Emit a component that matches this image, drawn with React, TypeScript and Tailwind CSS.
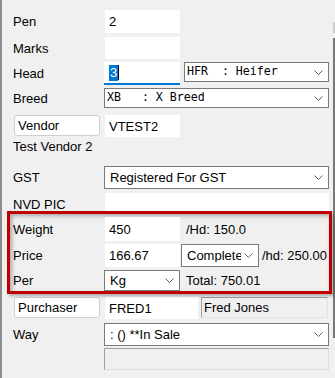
import React from "react";

const Chevron = () => (
  <svg width="9" height="5" viewBox="0 0 9 5" className="shrink-0 ml-[3px] mr-[5px]">
    <polyline points="0.5,0.5 4.5,4.5 8.5,0.5" fill="none" stroke="#606060" strokeWidth="1" />
  </svg>
);

function Label({ children, w = "w-[103px] pl-[11px]" }: { children?: React.ReactNode; w?: string }) {
  return <div className={`${w} shrink-0 h-full flex items-center whitespace-nowrap`}>{children}</div>;
}

function Field({ children, w, extra = "" }: { children?: React.ReactNode; w: string; extra?: string }) {
  return <div className={`${w} h-full bg-white pl-[4px] flex items-center shrink-0 whitespace-nowrap ${extra}`}>{children}</div>;
}

function Select({
  children,
  w,
  h = "h-full",
  mono = false,
  clip = false,
  extra = "",
}: {
  children?: React.ReactNode;
  w: string;
  h?: string;
  mono?: boolean;
  clip?: boolean;
  extra?: string;
}) {
  return (
    <div className={`${w} ${h} bg-white border border-[#7a7a7a] flex items-center shrink-0 ${extra}`}>
      <div
        className={`flex-1 min-w-0 whitespace-pre ${clip ? "overflow-hidden" : ""} ${
          mono ? "pl-[2px] font-['DejaVu_Sans_Mono',monospace] text-[11.6px]" : "pl-[5px]"
        }`}
      >
        {children}
      </div>
      <Chevron />
    </div>
  );
}

function BoxLabel({ children }: { children: React.ReactNode }) {
  return (
    <div className="ml-[12px] w-[86px] h-[21px] shrink-0 rounded-[3px] border border-[#cfcfcf] bg-white pl-[3px] flex items-center">
      {children}
    </div>
  );
}

export default function App() {
  return (
    <div className="w-[335px] h-[378px] bg-[#f0f0f0] flex overflow-hidden text-[13px] text-black font-['Liberation_Sans',Arial,sans-serif] leading-none">
      <div className="w-[2px] shrink-0 bg-[#8c8c8c]" />
      <div className="flex-1 flex flex-col min-w-0">
        {/* Pen */}
        <div className="mt-[10px] h-[23px] flex items-center">
          <Label>Pen</Label>
          <Field w="w-[75px]">2</Field>
        </div>
        {/* Marks */}
        <div className="mt-[4px] h-[22px] flex items-center">
          <Label>Marks</Label>
          <Field w="w-[75px]" />
        </div>
        {/* Head */}
        <div className="mt-[3px] h-[23px] flex items-start">
          <Label>Head</Label>
          <div className="w-[76px] ml-[-1px] h-full bg-white border-b-2 border-[#0078d7] pl-[5px] flex items-center shrink-0">
            <span className="bg-[#0078d7] text-white px-[1px] leading-[16px]">3</span>
            <span className="w-px h-[15px] bg-black" />
          </div>
          <Select w="w-[145px]" h="h-[20px]" mono extra="ml-[4px]">
            {"HFR  : Heifer"}
          </Select>
        </div>
        {/* Breed */}
        <div className="mt-[3px] h-[20px] flex items-center">
          <Label>Breed</Label>
          <Select w="w-[225px]" mono extra="ml-[-1px]">
            {"XB   : X Breed"}
          </Select>
        </div>
        {/* Vendor */}
        <div className="mt-[7px] h-[22px] flex items-start">
          <BoxLabel>Vendor</BoxLabel>
          <Field w="w-[75px]" extra="ml-[5px]">
            VTEST2
          </Field>
        </div>
        {/* Test Vendor 2 */}
        <div className="h-[19px] flex items-center">
          <Label w="w-[200px] pl-[11px]">Test Vendor 2</Label>
        </div>
        {/* GST */}
        <div className="mt-[10px] h-[23px] flex items-center">
          <Label>GST</Label>
          <Select w="w-[225px]" extra="ml-[-1px]">
            Registered For GST
          </Select>
        </div>
        {/* NVD PIC */}
        <div className="mt-[4px] h-[22px] flex items-center">
          <Label>NVD PIC</Label>
          <Field w="w-[224px]" />
        </div>
        {/* Highlighted block */}
        <div className="relative mt-[-4px] ml-[5px] mr-[1px] h-[83px] shrink-0 border-[3px] border-[#c00000] bg-[#f0f0f0] flex flex-col shadow-[inset_2px_2px_4px_rgba(0,0,0,0.3),2px_2px_3px_rgba(0,0,0,0.3)]">
          <div className="mt-[3px] h-[24px] flex items-center">
            <Label w="w-[95px] pl-[3px]">Weight</Label>
            <Field w="w-[75px]">450</Field>
            <span className="ml-[6px] whitespace-nowrap">/Hd: 150.0</span>
          </div>
          <div className="mt-[3px] h-[23px] flex items-center">
            <Label w="w-[95px] pl-[3px]">Price</Label>
            <Field w="w-[75px]">166.67</Field>
            <Select w="w-[78px]" clip extra="ml-[1px]">
              Complete
            </Select>
            <span className="ml-[3px] whitespace-nowrap">/hd: 250.00</span>
          </div>
          <div className="mt-[3px] h-[21px] flex items-center">
            <Label w="w-[95px] pl-[3px]">Per</Label>
            <Select w="w-[76px]" extra="ml-[-1px]">
              Kg
            </Select>
            <span className="ml-[6px] whitespace-nowrap">Total: 750.01</span>
          </div>
        </div>
        {/* Purchaser */}
        <div className="mt-[3px] h-[22px] flex items-start">
          <BoxLabel>Purchaser</BoxLabel>
          <Field w="w-[93px]" extra="ml-[5px]">
            FRED1
          </Field>
          <div className="ml-[3px] w-[127px] h-[21px] shrink-0 border-t border-l border-[#a0a0a0] border-b border-r border-b-[#e3e3e3] border-r-[#e3e3e3] pl-[2px] flex items-center whitespace-nowrap">
            Fred Jones
          </div>
        </div>
        {/* Way */}
        <div className="mt-[4px] h-[23px] flex items-center">
          <Label>Way</Label>
          <Select w="w-[225px]" extra="ml-[-1px]">
            : () **In Sale
          </Select>
        </div>
        <div className="mt-[2px] h-[22px] flex">
          <div className="ml-[102px] w-[225px] h-full border-t border-l border-[#a0a0a0] border-b border-r border-b-[#dcdcdc] border-r-[#dcdcdc]" />
        </div>
      </div>
      <div className="w-[2px] shrink-0 flex flex-col">
        <div className="h-[22px]" />
        <div className="h-[11px] bg-[#cdcdcd]" />
        <div className="h-[5px]" />
        <div className="h-[300px] bg-[#777777]" />
      </div>
    </div>
  );
}
